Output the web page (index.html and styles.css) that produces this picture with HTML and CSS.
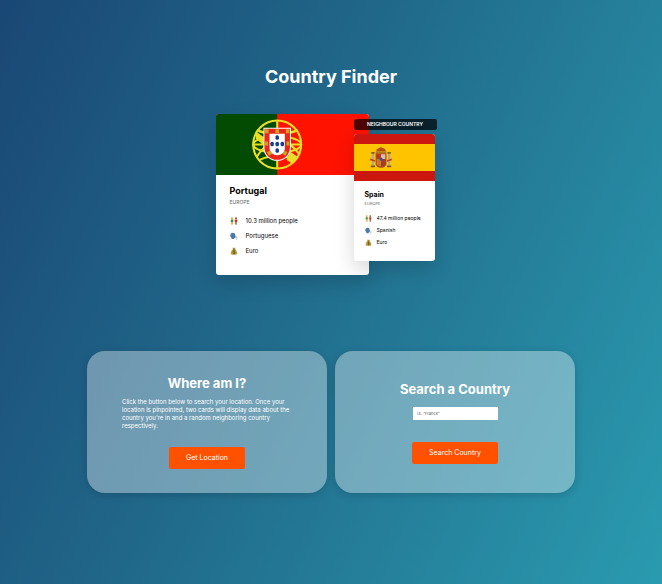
FILE: index.html
```html
<!DOCTYPE html>
<html lang="en">
<head>
<meta charset="utf-8">
<meta name="viewport" content="width=device-width, initial-scale=1">
<title>Country Finder</title>
<link rel="stylesheet" href="styles.css">
</head>
<body>
<svg class="sprites" aria-hidden="true">
  <symbol id="people" viewBox="0 0 16 16">
    <circle cx="4" cy="2.500" r="2" fill="#d9a82e"/>
    <path d="M1.500 5h5v5h-5z" fill="#4d8a4b"/>
    <path d="M2 10h4l-.4 5.500H2.500z" fill="#e0b64c"/>
    <circle cx="12" cy="2.500" r="2" fill="#8b5a22"/>
    <path d="M9.500 5h5l-.3 6h-4.400z" fill="#c9302a"/>
    <path d="M10.500 11h3l-.3 4.500h-2.400z" fill="#8f5a25"/>
    <path d="M6.500 5.500l1.500 2 1.500-2" fill="none" stroke="#e3b13c" stroke-width="1"/>
  </symbol>
  <symbol id="speech" viewBox="0 0 16 16">
    <path d="M6 1.500c-3.500 0-5.500 2.500-5.500 5.500 0 2 1 3.500 2.500 4.500V14h5.500v-2h2l.3-2.500 1-.7-1.200-2C10.500 3.500 9 1.500 6 1.500z" fill="#4d78a8"/>
    <path d="M11.500 10.500l3-1.500M11.700 12h3.500M11.500 13.500l2.500 1.500" stroke="#8799ad" stroke-width="1.200"/>
  </symbol>
  <symbol id="money" viewBox="0 0 16 16">
    <path d="M5 1l2 1 1-1 1.200 1L11.500 1 10 4.500C13 7 14.800 10 14.500 13c-.2 2-1.500 2.500-6.500 2.500S1.700 15 1.500 13C1.200 10 3 7 6 4.500z" fill="#b99b40"/>
    <path d="M5.500 4.500h5" stroke="#705a1c" stroke-width="1.200"/>
    <path d="M10 8.200C9.500 7.400 6.300 7 6.300 9c0 1.800 3.800 1 3.800 2.800 0 1.700-3.300 1.700-4 .5M8.100 6.500v7.500" fill="none" stroke="#49401f" stroke-width="1"/>
  </symbol>
</svg>
<main class="page">
  <h1 class="title">Country Finder</h1>

  <section class="countries">
    <article class="card">
      <svg class="flag" viewBox="0 0 150 100" preserveAspectRatio="xMidYMid slice" role="img" aria-label="Flag of Portugal">
        <path fill="#ff1200" d="M0 0h150v100H0z"/>
        <path fill="#034a03" d="M0 0h60v100H0z"/>
        <g fill="none" stroke="#e9e025" stroke-width="2">
          <circle cx="60" cy="50" r="23.500"/>
          <ellipse cx="60" cy="50" rx="23.500" ry="8"/>
          <path d="M60 26v48M36.500 50h47M40 36c12 3 31 8 42 24M80 36C68 39 50 46 40 62M43 65c10-5 24-5 34 0M42 37c10 4 26 4 36 0"/>
        </g>
        <path d="M39 37l8 6v8l-8-7zM81 63l-8-6-4 8 6 4z" fill="#e9e025"/>
        <path d="M47 34h26v19c0 7.500-6 12.500-13 12.500S47 60.500 47 53z" fill="#ed2418" stroke="#fff" stroke-width="1"/>
        <path d="M52.500 39.500h15v14c0 4.500-3.500 7-7.500 7s-7.500-2.500-7.500-7z" fill="#fff"/>
        <g fill="#173d8d">
          <rect x="58.300" y="41" width="3.400" height="4.400" rx="1.500"/>
          <rect x="58.300" y="47.300" width="3.400" height="4.400" rx="1.500"/>
          <rect x="58.300" y="53.600" width="3.400" height="4.400" rx="1.500"/>
          <rect x="53.300" y="47.300" width="3.400" height="4.400" rx="1.500"/>
          <rect x="63.300" y="47.300" width="3.400" height="4.400" rx="1.500"/>
        </g>
        <g fill="#c9a61d">
          <path d="M48 35h3.500v4H48zM58.200 35h3.600v4h-3.600zM68.500 35H72v4h-3.500zM48 47h3v4h-3zM69 47h3v4h-3zM50 57.500l3-1.500 2 3-3 2zM70 57.500l-3-1.500-2 3 3 2z"/>
        </g>
      </svg>
      <div class="card-body">
        <h2 class="country">Portugal</h2>
        <p class="region">Europe</p>
        <ul class="facts">
          <li><svg class="icon" aria-hidden="true"><use href="#people"/></svg>10.3 million people</li>
          <li><svg class="icon" aria-hidden="true"><use href="#speech"/></svg>Portuguese</li>
          <li><svg class="icon" aria-hidden="true"><use href="#money"/></svg>Euro</li>
        </ul>
      </div>
    </article>

    <div class="neighbour">
      <p class="badge">Neighbour country</p>
      <article class="card card-small">
        <svg class="flag" viewBox="0 0 150 100" preserveAspectRatio="xMidYMid slice" role="img" aria-label="Flag of Spain">
          <path fill="#cb1710" d="M0 0h150v100H0z"/>
          <path fill="#ffc400" d="M0 25h150v50H0z"/>
          <path d="M33 43h4v23h-4zM63 43h4v23h-4z" fill="#b7a78d"/>
          <path d="M31 65h8v3h-8zM61 65h8v3h-8zM32 40h6v3h-6zM62 40h6v3h-6z" fill="#7d5a3a"/>
          <path d="M30 52l9 3v3l-9-3zM70 52l-9 3v3l9-3z" fill="#c03a20"/>
          <path d="M42 35c3-4 13-4 16 0l1 4H41z" fill="#b84a17"/>
          <path d="M49 30h2v4h-2z" fill="#a3651b"/>
          <path d="M40 39h20v3H40z" fill="#a8801c"/>
          <path d="M40 42h20v19c0 5-5 8-10 8s-10-3-10-8z" fill="#a8481f"/>
          <path d="M42 44h8v9h-8z" fill="#bd3520"/>
          <path d="M50 44h8v9h-8z" fill="#d5bfb6"/>
          <path d="M42 53h8v13c-5 0-8-2-8-5z" fill="#cc7a22"/>
          <path d="M50 53h8v8c0 3-3 5-8 5z" fill="#a33a2b"/>
          <circle cx="50" cy="53" r="3" fill="#3b4f92"/>
        </svg>
        <div class="card-body">
          <h2 class="country">Spain</h2>
          <p class="region">Europe</p>
          <ul class="facts">
            <li><svg class="icon" aria-hidden="true"><use href="#people"/></svg>47.4 million people</li>
            <li><svg class="icon" aria-hidden="true"><use href="#speech"/></svg>Spanish</li>
            <li><svg class="icon" aria-hidden="true"><use href="#money"/></svg>Euro</li>
          </ul>
        </div>
      </article>
    </div>
  </section>

  <div class="panels">
    <section class="panel">
      <h2 class="panel-title">Where am I?</h2>
      <p class="panel-text">Click the button below to search your location. Once your location is pinpointed, two cards will display data about the country you're in and a random neighboring country respectively.</p>
      <button class="button" type="button">Get Location</button>
    </section>
    <form class="panel">
      <h2 class="panel-title"><label for="country">Search a Country</label></h2>
      <input class="field" id="country" type="text" placeholder="i.e. &quot;France&quot;">
      <button class="button" type="button">Search Country</button>
    </form>
  </div>
</main>
</body>
</html>
```
FILE: styles.css
```css
* {
  box-sizing: border-box;
  margin: 0;
  padding: 0;
}

body {
  min-height: 100vh;
  font-family: Inter, "Liberation Sans", sans-serif;
  font-size: 6px;
  color: #fff;
  background: linear-gradient(115deg, #1a4775, #216b8c 45%, #2a9bb0);
}

.sprites {
  position: absolute;
  width: 0;
  height: 0;
}

.page {
  display: flex;
  flex-direction: column;
  align-items: center;
  padding: 65px 24px;
}

.title {
  font-size: 18px;
  line-height: 24px;
  font-weight: 700;
}

.countries {
  display: flex;
  align-items: flex-start;
  margin-top: 25px;
  padding-right: 12px;
}

.card {
  width: 153px;
  overflow: hidden;
  border-radius: 3px;
  color: #000;
  background: #fff;
  box-shadow: 0 8px 20px rgba(0, 0, 0, 0.16);
}

.flag {
  display: block;
  width: 100%;
  height: 61px;
}

.card-body {
  padding: 10px 14px 17px;
}

.country {
  font-size: 9px;
  line-height: 12px;
  font-weight: 700;
}

.region {
  margin-top: 2px;
  font-size: 5px;
  line-height: 7px;
  text-transform: uppercase;
  color: #666;
}

.facts {
  margin-top: 7px;
  list-style: none;
}

.facts li {
  display: flex;
  align-items: center;
  gap: 8px;
  line-height: 15px;
}

.icon {
  width: 8px;
  height: 8px;
}

.neighbour {
  position: relative;
  display: flex;
  flex-direction: column;
  gap: 4px;
  margin: 5px 0 0 -15px;
}

.badge {
  margin-right: -2px;
  border-radius: 2px;
  font-size: 5px;
  line-height: 11px;
  font-weight: 600;
  text-align: center;
  text-transform: uppercase;
  background: rgba(0, 0, 0, 0.7);
}

.card-small {
  width: 81px;
}

.card-small .flag {
  height: 47px;
}

.card-small .card-body {
  padding: 9px 11px 13px;
}

.card-small .country {
  font-size: 7px;
  line-height: 9px;
}

.card-small .region {
  margin-top: 1px;
  font-size: 4px;
}

.card-small .facts {
  margin-top: 5px;
}

.card-small .facts li {
  gap: 5px;
  font-size: 5px;
  line-height: 12px;
}

.card-small .icon {
  width: 7px;
  height: 7px;
}

.panels {
  display: grid;
  grid-template-columns: 1fr 1fr;
  gap: 8px;
  width: 80%;
  max-width: 488px;
  margin-top: 76px;
}

.panel {
  display: flex;
  flex-direction: column;
  align-items: center;
  justify-content: center;
  min-height: 142px;
  padding: 24px 35px;
  border-radius: 18px;
  background: rgba(255, 255, 255, 0.36);
  box-shadow: 0 2px 8px rgba(0, 0, 0, 0.16);
}

.panel-title {
  font-size: 13px;
  line-height: 16px;
  font-weight: 700;
}

.panel-text {
  margin-top: 7px;
  line-height: 8px;
}

.button {
  margin-top: 17px;
  padding: 0 17px;
  border: 0;
  border-radius: 2px;
  font: inherit;
  font-size: 7px;
  line-height: 22px;
  color: #fff;
  background: #ff5100;
}

.field {
  width: 85px;
  height: 13px;
  margin-top: 10px;
  padding: 0 4px;
  border: 0;
  font: inherit;
  font-size: 4px;
  color: #333;
  background: #fff;
}

.field::placeholder {
  color: #555;
}

.field + .button {
  margin-top: 22px;
}
```
